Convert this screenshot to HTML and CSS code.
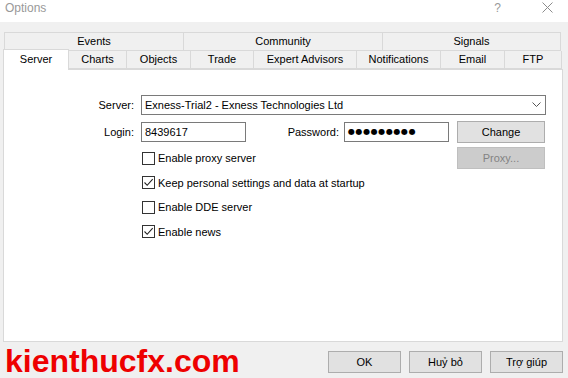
FILE: index.html
```html
<!DOCTYPE html>
<html>
<head>
<meta charset="utf-8">
<link rel="stylesheet" href="styles.css">
</head>
<body>
<div class="dialog">
  <div class="titlebar">
    <span class="title">Options</span>
    <span class="tb-help">?</span>
    <svg class="tb-close" width="11" height="11" viewBox="0 0 11 11"><path d="M0.5 0.5L10.5 10.5M10.5 0.5L0.5 10.5" stroke="#8c8c8c" stroke-width="1" fill="none"/></svg>
  </div>
  <div class="tabs">
    <div class="tabrow top">
      <div class="tab w-events">Events</div>
      <div class="tab w-community">Community</div>
      <div class="tab w-signals">Signals</div>
    </div>
    <div class="tabrow bottom">
      <div class="tab sel w-server">Server</div>
      <div class="tab w-charts">Charts</div>
      <div class="tab w-objects">Objects</div>
      <div class="tab w-trade">Trade</div>
      <div class="tab w-expert">Expert Advisors</div>
      <div class="tab w-notif">Notifications</div>
      <div class="tab w-email">Email</div>
      <div class="tab w-ftp">FTP</div>
    </div>
  </div>
  <div class="panel">
    <div class="form">
      <label class="lbl">Server:</label>
      <div class="combo"><span>Exness-Trial2 - Exness Technologies Ltd</span>
        <svg class="chev" width="9" height="5" viewBox="0 0 9 5"><path d="M0.5 0.5L4.5 4.5L8.5 0.5" stroke="#555" stroke-width="1" fill="none"/></svg>
      </div>

      <label class="lbl">Login:</label>
      <div class="input">8439617</div>
      <label class="lbl pw-lbl">Password:</label>
      <div class="input pw">●●●●●●●●●</div>
      <div class="btn change">Change</div>

      <div class="check c-proxy"><span class="box"></span>Enable proxy server</div>
      <div class="btn proxy">Proxy...</div>

      <div class="check c-row"><span class="box on"><svg width="11" height="11" viewBox="0 0 11 11"><path d="M1.5 5.5L4.2 8.3L9.7 2.2" stroke="#222" stroke-width="1.1" fill="none"/></svg></span>Keep personal settings and data at startup</div>
      <div class="check c-row"><span class="box"></span>Enable DDE server</div>
      <div class="check c-row"><span class="box on"><svg width="11" height="11" viewBox="0 0 11 11"><path d="M1.5 5.5L4.2 8.3L9.7 2.2" stroke="#222" stroke-width="1.1" fill="none"/></svg></span>Enable news</div>
    </div>
  </div>
  <div class="footer">
    <div class="brand">kienthucfx.com</div>
    <div class="buttons">
      <div class="btn fbtn">OK</div>
      <div class="btn fbtn">Huỷ bỏ</div>
      <div class="btn fbtn">Trợ giúp</div>
    </div>
  </div>
</div>
</body>
</html>
```
FILE: styles.css
```css
html, body {
  margin: 0;
  padding: 0;
}
body {
  width: 568px;
  height: 378px;
  overflow: hidden;
  background: #f0f0f0;
  font-family: "Liberation Sans", Arial, sans-serif;
  font-size: 11px;
  color: #000;
}
.dialog {
  display: flex;
  flex-direction: column;
  height: 378px;
}
.titlebar {
  height: 22px;
  background: #fff;
  display: flex;
  align-items: center;
  position: relative;
}
.title {
  margin-left: 5px;
  color: #999;
  font-size: 12px;
  margin-top: -6px;
}
.tb-help {
  margin-left: auto;
  color: #999;
  font-size: 12px;
  margin-top: -6px;
  margin-right: 41px;
}
.tb-close {
  margin-right: 15px;
  margin-top: -6px;
}
.tabs {
  margin-top: 10px;
  padding-left: 4px;
}
.tabrow {
  display: flex;
}
.tabrow.top {
  height: 19px;
}
.tabrow.bottom {
  height: 18px;
  align-items: flex-end;
  position: relative;
  z-index: 1;
}
.tab {
  box-sizing: border-box;
  border: 1px solid #d9d9d9;
  border-right: none;
  background: #f0f0f0;
  text-align: center;
  line-height: 16px;
  height: 19px;
}
.tabrow.top .tab:last-child,
.tabrow.bottom .tab:last-child {
  border-right: 1px solid #d9d9d9;
}
.tabrow.bottom .tab {
  height: 18px;
  border-top: none;
  line-height: 17px;
}
.tabrow.bottom .tab.sel {
  background: #fff;
  height: 21px;
  margin-top: -3px;
  margin-left: -1px;
  border-top: 1px solid #d9d9d9;
  border-right: 1px solid #d9d9d9;
  border-bottom: none;
  line-height: 19px;
  margin-bottom: -1px;
}
.tabrow.bottom .tab.sel + .tab {
  border-left: none;
}
.w-events { width: 179px; }
.w-community { width: 199px; }
.w-signals { width: 179px; }
.w-server { width: 66px; }
.w-charts { width: 57px; }
.w-objects { width: 64px; }
.w-trade { width: 63px; }
.w-expert { width: 103px; }
.w-notif { width: 84px; }
.w-email { width: 64px; }
.w-ftp { width: 58px; }

.panel {
  margin-left: 3px;
  width: 560px;
  height: 274px;
  box-sizing: border-box;
  border: 1px solid #d9d9d9;
  background: #fff;
}
.form {
  display: grid;
  grid-template-columns: 137px 105px 98px 105px 96px;
  grid-template-rows: 28px 27px 24.5px 24.5px 24.5px 24.5px;
  align-items: center;
  padding-top: 21px;
}
.lbl {
  text-align: right;
  padding-right: 7px;
}
.pw-lbl {
  padding-right: 5px;
}
.combo {
  grid-column: 2 / 6;
  box-sizing: border-box;
  height: 20px;
  border: 1px solid #7a7a7a;
  display: flex;
  align-items: center;
  padding-left: 3px;
  margin-right: -1px;
}
.chev {
  margin-left: auto;
  margin-right: 4px;
}
.input {
  box-sizing: border-box;
  height: 20px;
  border: 1px solid #7a7a7a;
  padding-left: 3px;
  line-height: 18px;
}
.pw {
  font-family: "DejaVu Sans", sans-serif;
  font-size: 8px;
  letter-spacing: 0.6px;
  padding-left: 3px;
}
.btn {
  box-sizing: border-box;
  height: 22px;
  border: 1px solid #adadad;
  background: #e1e1e1;
  text-align: center;
  line-height: 20px;
}
.change {
  margin-left: 8px;
  width: 88px;
}
.proxy {
  grid-column: 5;
  margin-left: 8px;
  width: 88px;
  background: #cccccc;
  border-color: #bfbfbf;
  color: #838383;
}
.check {
  display: flex;
  align-items: center;
  margin-left: 1px;
  white-space: nowrap;
}
.c-proxy {
  grid-column: 2 / 5;
}
.c-row {
  grid-column: 2 / 6;
}
.box {
  box-sizing: border-box;
  width: 13px;
  height: 13px;
  border: 1px solid #333;
  background: #fff;
  margin-right: 3px;
  display: flex;
  align-items: center;
  justify-content: center;
}
.footer {
  display: flex;
  align-items: center;
  height: 36px;
}
.brand {
  margin-left: 5px;
  font-weight: bold;
  font-size: 32px;
  color: #ee0000;
  line-height: 32px;
  margin-top: 2px;
}
.buttons {
  margin-left: auto;
  display: flex;
  gap: 8px;
  margin-right: 5px;
  margin-top: 4px;
}
.fbtn {
  width: 73px;
}
```
